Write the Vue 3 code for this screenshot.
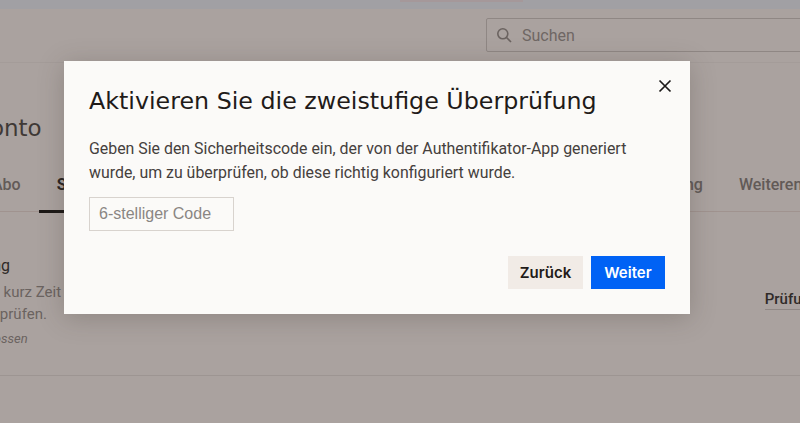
<template>
  <div class="page">
    <!-- page behind the dialog, scrolled a little to the right -->
    <div class="strip">
      <span class="strip-tab"></span>
    </div>
    <header class="header">
      <div class="search">
        <svg class="search-icon" viewBox="0 0 16 16" width="16" height="16" fill="none" stroke="#6b6360" stroke-width="1.6">
          <circle cx="6.8" cy="6.8" r="5" />
          <path d="M10.5 10.5 L15 15" />
        </svg>
        <span class="search-text">Suchen</span>
      </div>
    </header>
    <main class="content">
      <h1 class="page-title">Konto</h1>
      <nav class="tabs">
        <span v-for="tab in tabs" :key="tab.label" class="tab" :class="{ active: tab.active }">{{ tab.label }}</span>
      </nav>
      <section class="row">
        <div class="row-text">
          <h2 class="row-title">Zweistufige Überprüfung</h2>
          <p class="row-desc">Der Code gilt nur für eine kurz Zeit</p>
          <p class="row-desc">Ihr Anmeldeverhalten zu prüfen.</p>
          <p class="row-note">Vorgang bisher nie abgeschlossen</p>
        </div>
        <span class="row-action">Prüfung starten</span>
      </section>
    </main>

    <div class="dialog">
      <button class="close" aria-label="Schließen">
        <svg viewBox="0 0 14 14" width="14" height="14" fill="none" stroke="#1c1a19" stroke-width="1.7">
          <path d="M1.5 1.5 L12.5 12.5 M12.5 1.5 L1.5 12.5" />
        </svg>
      </button>
      <h2 class="dialog-title">Aktivieren Sie die zweistufige Überprüfung</h2>
      <p class="dialog-text">
        Geben Sie den Sicherheitscode ein, der von der Authentifikator-App generiert<br />
        wurde, um zu überprüfen, ob diese richtig konfiguriert wurde.
      </p>
      <input class="code-input" type="text" placeholder="6-stelliger Code" />
      <div class="actions">
        <button class="btn btn-back">Zurück</button>
        <button class="btn btn-next">Weiter</button>
      </div>
    </div>
  </div>
</template>

<script setup>
const tabs = [
  { label: 'Abo', active: false },
  { label: 'Sicherheit', active: true },
  { label: 'Profil', active: false },
  { label: 'Datenschutz', active: false },
  { label: 'Rechnungen', active: false },
  { label: 'Geräte', active: false },
  { label: 'Benachrichtigung', active: false },
  { label: 'Weiteren', active: false }
]
</script>

<style scoped>
.page {
  position: relative;
  width: 800px;
  height: 423px;
  overflow: hidden;
  background: #aaa29f;
  font-family: Roboto, "Liberation Sans", sans-serif;
  color: #5f5754;
}

.strip {
  height: 9px;
  background: #a1a0a4;
  padding-left: 400px;
  box-sizing: border-box;
}

.strip-tab {
  display: block;
  width: 123px;
  height: 2px;
  background: #a5989a;
}

.header {
  height: 54px;
  box-sizing: border-box;
  border-bottom: 1px solid #a49c99;
  padding: 9px 0 0 486px;
}

.search {
  width: 340px;
  height: 34px;
  box-sizing: border-box;
  border: 1px solid #8f8784;
  border-radius: 2px;
  display: flex;
  align-items: center;
  gap: 10px;
  padding-left: 9px;
}

.search-text {
  font-size: 16px;
  color: #6f6764;
}

.content {
  margin-left: -22px;
  width: 900px;
}

.page-title {
  margin: 51px 0 0 -2px;
  font-family: "DejaVu Sans", sans-serif;
  font-size: 23px;
  line-height: 28px;
  font-weight: 400;
  color: #3f3936;
}

.tabs {
  display: flex;
  margin-top: 33px;
  margin-left: -4px;
  height: 36px;
  border-bottom: 1px solid #a0938f;
}

.tab {
  display: block;
  box-sizing: border-box;
  padding: 0 18px;
  height: 38px;
  font-size: 16px;
  font-weight: 500;
  line-height: 20px;
  color: #625a57;
  white-space: nowrap;
}

.tab.active {
  margin-right: 3px;
  color: #2a2523;
  font-weight: 700;
  border-bottom: 3px solid #1c1816;
}

.row {
  display: flex;
  justify-content: space-between;
  border-bottom: 1px solid #9d9592;
  height: 164px;
  box-sizing: border-box;
  padding-top: 44px;
}

.row-text {
  margin-left: -143px;
}

.row-title {
  margin: 0;
  font-size: 16px;
  line-height: 20px;
  font-weight: 400;
  color: #2f2a28;
}

.row-desc {
  margin: 8px 0 0;
  font-size: 15px;
  line-height: 17px;
  color: #6b6360;
}

.row-desc + .row-desc {
  margin-top: 5px;
}

.row-note {
  margin: 7px 0 0;
  font-size: 13px;
  line-height: 17px;
  font-style: italic;
  color: #6b6360;
}

.row-action {
  margin: 33px 0 0;
  height: 20px;
  font-size: 15px;
  font-weight: 500;
  line-height: 20px;
  color: #2f2a28;
  white-space: nowrap;
  border-bottom: 1px solid #8f8784;
  padding-right: 8px;
}

.dialog {
  position: absolute;
  left: 64px;
  top: 61px;
  width: 626px;
  height: 253px;
  box-sizing: border-box;
  padding: 25px 25px;
  background: #fbfaf8;
  box-shadow: 0 4px 24px rgba(60, 50, 45, 0.25);
}

.close {
  position: absolute;
  right: 18px;
  top: 18px;
  width: 14px;
  height: 14px;
  padding: 0;
  border: 0;
  background: none;
  display: block;
}

.close svg {
  display: block;
}

.dialog-title {
  margin: 0;
  font-family: "DejaVu Sans", sans-serif;
  font-size: 23.75px;
  line-height: 30px;
  font-weight: 400;
  color: #1f1b19;
  white-space: nowrap;
}

.dialog-text {
  margin: 21px 0 0;
  font-size: 15.9px;
  line-height: 24px;
  color: #45403d;
  white-space: nowrap;
}

.code-input {
  display: block;
  margin-top: 12px;
  width: 145px;
  height: 34px;
  box-sizing: border-box;
  border: 1px solid #d8d3ce;
  padding: 0 9px;
  background: #fbfaf8;
  font-family: "Liberation Sans", sans-serif;
  font-size: 16px;
  outline: none;
}

.code-input::placeholder {
  color: #8a8683;
  opacity: 1;
}

.actions {
  display: flex;
  justify-content: flex-end;
  gap: 8px;
  margin-top: 25px;
}

.btn {
  height: 33px;
  width: 75px;
  border: 0;
  padding: 0;
  font-family: Inter, "Liberation Sans", sans-serif;
  font-size: 15px;
  font-weight: 600;
}

.btn-back {
  background: #f1ebe6;
  color: #1f1b19;
}

.btn-next {
  width: 74px;
  background: #0062f5;
  color: #fff;
}
</style>
